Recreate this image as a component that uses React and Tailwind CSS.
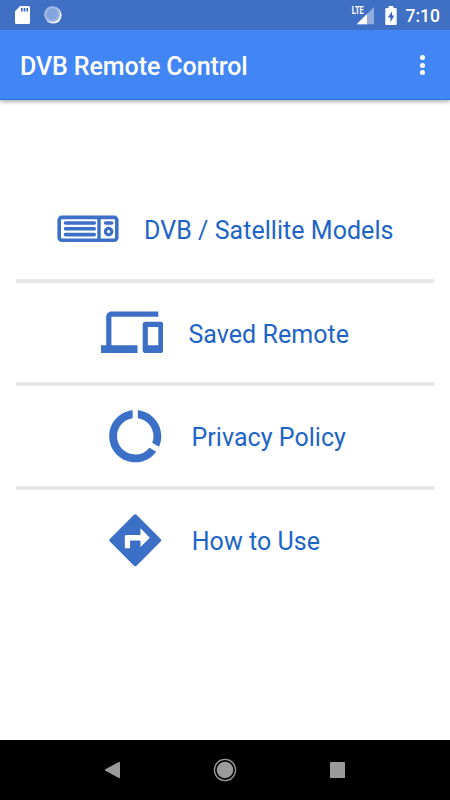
import { MdDataUsage, MdDevices } from 'react-icons/md';

function ReceiverIcon({ className }) {
  return (
    <svg viewBox="0 0 62.5 62.5" className={className} fill="none" stroke="currentColor">
      <rect x="2.2" y="20.4" width="57.6" height="22.8" rx="2.6" strokeWidth="3.6" />
      <path d="M42 19.3v25" strokeWidth="3.4" />
      <path d="M8.5 26h28.8M8.5 31.8h28.8M8.5 37.6h28.8M48.7 26h6" strokeWidth="3.6" strokeLinecap="round" />
      <circle cx="51.6" cy="34.6" r="3.2" strokeWidth="3.2" />
    </svg>
  );
}

function DirectionsIcon({ className }) {
  return (
    <svg viewBox="0 0 24 24" className={className} fill="currentColor">
      <path d="M21.85 11.6l-9.45-9.45q-.4-.3-.8 0L2.15 11.6q-.3.4 0 .8l9.45 9.45q.4.3.8 0l9.45-9.45q.3-.4 0-.8zM14 14.6V12.1h-4v3H8v-4.6q0-.5.5-.5H14V7.4l3.6 3.6-3.6 3.6z" />
    </svg>
  );
}

const items = [
  { label: 'DVB / Satellite Models', icon: ReceiverIcon },
  { label: 'Saved Remote', icon: MdDevices },
  { label: 'Privacy Policy', icon: MdDataUsage },
  { label: 'How to Use', icon: DirectionsIcon },
];

function StatusBar() {
  return (
    <div className="relative z-10 flex h-[30px] items-center bg-[#3f70c4] text-white">
      <svg viewBox="0 0 15 18" className="ml-[15px] h-[18px] w-[15px]">
        <path d="M5.2 0H13.5Q15 0 15 1.5V16.5Q15 18 13.5 18H1.5Q0 18 0 16.5V5.2Z" fill="#fff" />
        <path d="M6.8 2v3.4M9.5 2v3.4M12.2 2v3.4" stroke="#2f66c5" strokeWidth="1.6" />
      </svg>
      <svg viewBox="0 0 18 18" className="ml-[13.5px] h-[18px] w-[18px]">
        <circle cx="9.2" cy="9.2" r="8.4" fill="#fff" />
        <circle cx="8.2" cy="8.2" r="8" fill="#8eabdf" />
        <circle cx="8.2" cy="8.2" r="6.8" fill="none" stroke="#b4c7ea" strokeWidth="2" strokeDasharray="1 1.1" />
        <circle cx="8.2" cy="8.2" r="5.6" fill="#83a4dc" />
      </svg>
      <svg viewBox="0 0 24 20" className="ml-auto h-5 w-6">
        <path d="M23 2V19.3H5.7Z" fill="#8facdf" />
        <path d="M16 9V19.3H5.7Z" fill="#fff" />
        <text x="0.8" y="9" fill="#fff" textLength="12" lengthAdjust="spacingAndGlyphs" className="font-[Roboto] text-[10px] font-bold">
          LTE
        </text>
      </svg>
      <svg viewBox="0 0 12 19" className="ml-[10px] h-[19px] w-3">
        <path d="M3.6 0h4.8v2h2.3q1 0 1 1v15q0 1-1 1H1.3q-1 0-1-1V3q0-1 1-1h2.3Z" fill="#fff" />
        <path d="M7 5.5L2.8 11.5h2.6V16.2L9.3 9.6H7Z" fill="#3467bd" />
      </svg>
      <span className="mr-[10px] ml-[9px] pt-[3px] text-[17.5px] leading-none font-medium">7:10</span>
    </div>
  );
}

function AppBar() {
  return (
    <header className="relative flex h-[70px] items-center justify-between border-b border-[#1c74ea] bg-[#4286f5] pr-[25px] pl-5 text-white shadow-[0_2px_4px_rgba(0,0,0,0.3)]">
      <h1 className="pt-[3px] text-[25px] leading-none font-medium tracking-[-0.08px]">DVB Remote Control</h1>
      <button aria-label="More options" className="flex flex-col gap-[2.5px] pt-px">
        <span className="size-[5px] rounded-full bg-white" />
        <span className="size-[5px] rounded-full bg-white" />
        <span className="size-[5px] rounded-full bg-white" />
      </button>
    </header>
  );
}

function NavBar() {
  return (
    <nav className="flex h-[60px] items-center justify-center gap-[92px] bg-black text-[#9b9b9b]">
      <svg viewBox="0 0 20 20" className="size-5" fill="currentColor">
        <path d="M4.4 9.3 17.8 1.9Q19 1.5 19 2.7V17.2Q19 18.5 17.8 17.9L4.4 10.7Q3.6 10 4.4 9.3Z" />
      </svg>
      <svg viewBox="0 0 24 24" className="size-6">
        <circle cx="12" cy="12" r="10.6" fill="none" stroke="currentColor" strokeWidth="1.3" />
        <circle cx="12" cy="12" r="8.3" fill="currentColor" />
      </svg>
      <svg viewBox="0 0 20 20" className="size-5" fill="currentColor">
        <rect x="1" y="2" width="15" height="16" rx="0.6" />
      </svg>
    </nav>
  );
}

export default function App() {
  return (
    <div className="flex h-[800px] w-[450px] flex-col overflow-hidden bg-white font-[Roboto,sans-serif]">
      <StatusBar />
      <AppBar />
      <main className="flex-1 px-4 pt-[78.75px]">
        {items.map(({ label, icon: Icon }) => (
          <div
            key={label}
            className="flex h-[103.75px] items-center justify-center gap-[25px] border-b-4 border-[#e7e7e7] last:border-transparent"
          >
            <Icon className="size-[62.5px] shrink-0 text-[#3c70c7]" />
            <span className="min-w-[154px] pt-[3.5px] text-[25px] leading-none tracking-[0.04px] whitespace-nowrap text-[#1d64c8]">
              {label}
            </span>
          </div>
        ))}
      </main>
      <NavBar />
    </div>
  );
}
